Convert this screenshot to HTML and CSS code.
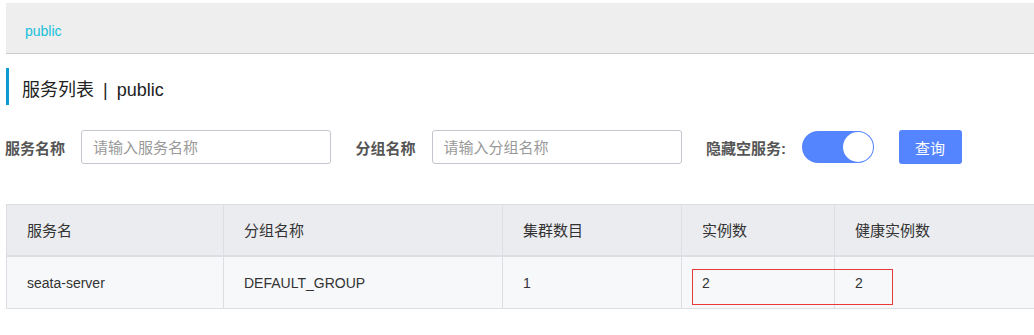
FILE: index.html
```html
<!DOCTYPE html>
<html lang="zh-CN">
<head>
    <meta charset="UTF-8">
    <meta name="viewport" content="width=device-width, initial-scale=1.0">
    <title>服务列表 - public</title>
    <link rel="stylesheet" href="styles.css">
</head>
<body>
    <div class="page">
        <div class="breadcrumb">
            <span class="namespace">public</span>
        </div>

        <h1 class="page-title">
            <span>服务列表</span>
            <span class="divider">|</span>
            <span>public</span>
        </h1>

        <form class="search-form">
            <div class="form-item">
                <label>服务名称</label>
                <input type="text" class="text-input" placeholder="请输入服务名称">
            </div>
            <div class="form-item">
                <label>分组名称</label>
                <input type="text" class="text-input" placeholder="请输入分组名称">
            </div>
            <div class="form-item">
                <label>隐藏空服务:</label>
                <div class="switch on"><span class="knob"></span></div>
            </div>
            <button type="button" class="search-button">查询</button>
        </form>

        <div class="table-wrap">
            <table class="service-table">
                <colgroup>
                    <col style="width: 217px">
                    <col style="width: 279px">
                    <col style="width: 179px">
                    <col style="width: 153px">
                    <col>
                </colgroup>
                <thead>
                    <tr>
                        <th>服务名</th>
                        <th>分组名称</th>
                        <th>集群数目</th>
                        <th>实例数</th>
                        <th>健康实例数</th>
                    </tr>
                </thead>
                <tbody>
                    <tr>
                        <td>seata-server</td>
                        <td>DEFAULT_GROUP</td>
                        <td>1</td>
                        <td>2</td>
                        <td>2</td>
                    </tr>
                </tbody>
            </table>
            <!-- red annotation box over the instance counts -->
            <div class="highlight"></div>
        </div>
    </div>
</body>
</html>
```

FILE: styles.css
```css
body {
    margin: 0;
    font-family: "Liberation Sans", "Noto Sans CJK SC", sans-serif;
    font-size: 14px;
    color: #333;
    background-color: #ffffff;
}
.page {
    padding-left: 6px;
    overflow: hidden;
}
.breadcrumb {
    margin-top: 3px;
    height: 51px;
    padding: 17px 19px 0;
    box-sizing: border-box;
    background-color: #eeeeee;
    border-bottom: 1px solid #cccccc;
    line-height: 22px;
}
.namespace {
    color: #17bfdb;
}
.page-title {
    margin: 14px 0 0;
    height: 37px;
    padding: 8px 0 0 13px;
    box-sizing: border-box;
    border-left: 3px solid #0b9bd0;
    font-size: 18px;
    font-weight: normal;
    line-height: 29px;
    color: #222;
}
.divider {
    margin: 0 4px;
}
.search-form {
    display: flex;
    align-items: center;
    gap: 24.5px;
    margin: 25px 0 0 -1px;
}
.form-item {
    display: flex;
    align-items: center;
    gap: 16px;
}
.form-item label {
    font-size: 15px;
    font-weight: bold;
    color: #555;
}
.text-input {
    width: 250px;
    height: 34px;
    box-sizing: border-box;
    padding: 0 11px;
    border: 1px solid #c4c6cf;
    border-radius: 3px;
    font-family: inherit;
    font-size: 15px;
    color: #333;
}
.text-input::placeholder {
    color: #999;
}
.switch {
    position: relative;
    width: 72px;
    height: 32px;
    border-radius: 16px;
    background-color: #5584ff;
}
.knob {
    position: absolute;
    top: 1px;
    right: 1px;
    width: 30px;
    height: 30px;
    border-radius: 50%;
    background-color: #ffffff;
}
.search-button {
    width: 63px;
    height: 34px;
    border: none;
    border-radius: 3px;
    background-color: #5584ff;
    color: #ffffff;
    font-family: inherit;
    font-size: 15px;
    cursor: pointer;
}
.table-wrap {
    position: relative;
    margin-top: 40px;
    width: 1100px;
}
.service-table {
    width: 100%;
    table-layout: fixed;
    border-collapse: separate;
    border-spacing: 0;
}
.service-table th,
.service-table td {
    padding: 2px 20px 0;
    border-left: 1px solid #dcdee3;
    text-align: left;
    font-weight: normal;
    color: #333;
}
.service-table th {
    height: 48px;
    line-height: 48px;
    font-size: 15px;
    background-color: #ebecf0;
    border-top: 1px solid #dcdee3;
    border-bottom: 2px solid #dcdee3;
}
.service-table td {
    height: 49px;
    line-height: 49px;
    background-color: #f7f8fa;
    border-bottom: 1px solid #dcdee3;
}
.highlight {
    position: absolute;
    left: 686px;
    top: 65px;
    width: 199px;
    height: 34px;
    border: 1px solid #e83a3a;
}
```
